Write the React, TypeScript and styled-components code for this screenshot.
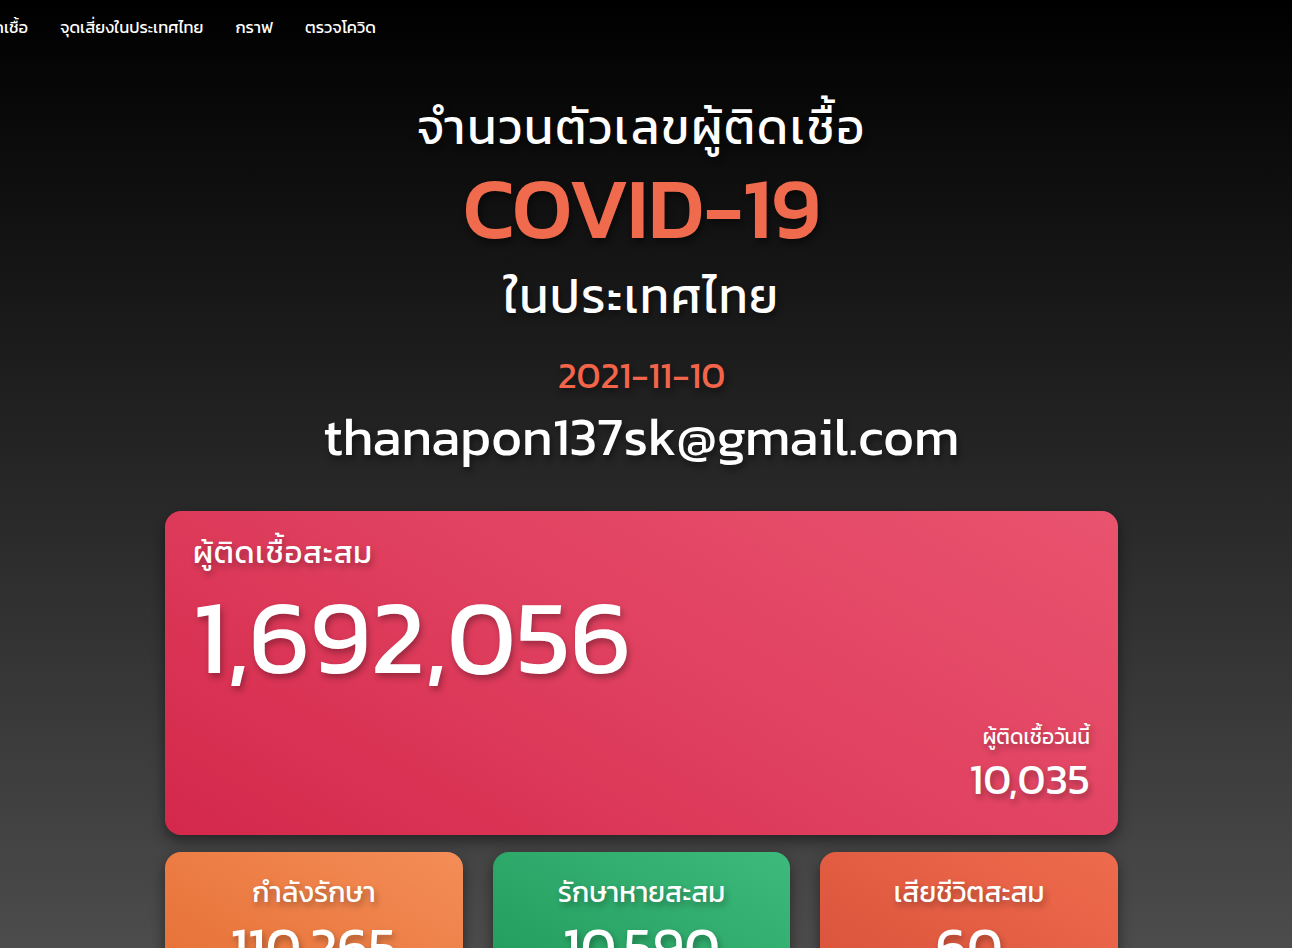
import React from "react";
import styled, { createGlobalStyle } from "styled-components";

const Global = createGlobalStyle`
  html, body { margin: 0; padding: 0; }
  body {
    background: #000;
    font-family: Kanit, "Noto Sans Thai", "Noto Sans", "Liberation Sans", sans-serif;
    color: #fff;
    overflow: hidden;
  }
`;

const Page = styled.div`
  width: 1292px;
  height: 948px;
  overflow: hidden;
  background: linear-gradient(180deg, #000000 0%, #4c4c4c 100%);
`;

const Inner = styled.div`
  width: 1283px;
`;

const Nav = styled.nav`
  height: 54px;
  display: flex;
  align-items: center;
  overflow: hidden;
`;

const NavList = styled.ul`
  display: flex;
  gap: 32px;
  list-style: none;
  margin: 0 0 0 -28px;
  padding: 0;
`;

const NavItem = styled.li`
  font-size: 16.5px;
  color: #fff;
  white-space: nowrap;
`;

const Hero = styled.header`
  display: flex;
  flex-direction: column;
  align-items: center;
  padding-top: 42px;
  text-shadow: 2px 4px 6px rgba(0, 0, 0, 0.45);
`;

const Heading = styled.h1`
  margin: 0;
  font-size: 48px;
  font-weight: 400;
  line-height: 62px;
  letter-spacing: 2px;
`;

const Covid = styled.h2`
  margin: 0;
  font-size: 86px;
  font-weight: 500;
  line-height: 100px;
  color: #f06a4e;
  letter-spacing: -0.5px;
`;

const SubHeading = styled.h3`
  margin: 3px 0 0;
  font-size: 48px;
  font-weight: 400;
  line-height: 70px;
  letter-spacing: 1.5px;
`;

const DateText = styled.div`
  margin-top: 19px;
  font-size: 37px;
  color: #f3654a;
  line-height: 50px;
`;

const Email = styled.div`
  margin-top: 3px;
  font-size: 53px;
  line-height: 68px;
`;

const Cards = styled.main`
  width: 953px;
  margin: 40px auto 0;
  display: flex;
  flex-direction: column;
  gap: 17px;
`;

const BigCard = styled.section`
  height: 324px;
  border-radius: 16px;
  background: linear-gradient(30deg, #d4284b 0%, #e0405f 50%, #e9536e 100%);
  box-shadow: 0 6px 14px rgba(0, 0, 0, 0.45);
  padding: 21px 28px 32px;
  box-sizing: border-box;
  display: flex;
  flex-direction: column;
  text-shadow: 2px 4px 6px rgba(0, 0, 0, 0.3);
`;

const CardLabel = styled.div`
  font-size: 31px;
  line-height: 40px;
  letter-spacing: 0.8px;
`;

const BigNumber = styled.div`
  font-size: 106px;
  line-height: 128px;
  font-weight: 400;
`;

const Today = styled.div`
  margin-top: auto;
  align-self: flex-end;
  text-align: right;
`;

const TodayLabel = styled.div`
  font-size: 21px;
  line-height: 28px;
  margin-bottom: 4px;
`;

const TodayNumber = styled.div`
  font-size: 43px;
  line-height: 48px;
`;

const Row = styled.div`
  display: grid;
  grid-template-columns: repeat(3, 1fr);
  gap: 30px;
`;

const SmallCard = styled.section<{ $from: string; $to: string }>`
  height: 200px;
  border-radius: 16px;
  background: linear-gradient(30deg, ${(p) => p.$from} 0%, ${(p) => p.$to} 100%);
  box-shadow: 0 6px 14px rgba(0, 0, 0, 0.45);
  display: flex;
  flex-direction: column;
  align-items: center;
  padding-top: 20px;
  box-sizing: border-box;
  text-shadow: 2px 4px 6px rgba(0, 0, 0, 0.3);
`;

const SmallLabel = styled.div`
  font-size: 28px;
  line-height: 40px;
`;

const SmallNumber = styled.div`
  margin-top: 2px;
  font-size: 55px;
  line-height: 66px;
`;

const stats = [
  { label: "กำลังรักษา", value: "110,265", from: "#e2692c", to: "#f48d58" },
  { label: "รักษาหายสะสม", value: "10,590", from: "#1b9454", to: "#3dba7c" },
  { label: "เสียชีวิตสะสม", value: "60", from: "#d44c36", to: "#ef6b4d" },
];

export default function App() {
  return (
    <Page>
      <Global />
      <Inner>
        <Nav>
          <NavList>
            <NavItem>ผู้ติดเชื้อ</NavItem>
            <NavItem>จุดเสี่ยงในประเทศไทย</NavItem>
            <NavItem>กราฟ</NavItem>
            <NavItem>ตรวจโควิด</NavItem>
          </NavList>
        </Nav>
        <Hero>
          <Heading>จำนวนตัวเลขผู้ติดเชื้อ</Heading>
          <Covid>COVID-19</Covid>
          <SubHeading>ในประเทศไทย</SubHeading>
          <DateText>2021-11-10</DateText>
          <Email>thanapon137sk@gmail.com</Email>
        </Hero>
        <Cards>
          <BigCard>
            <CardLabel>ผู้ติดเชื้อสะสม</CardLabel>
            <BigNumber>1,692,056</BigNumber>
            <Today>
              <TodayLabel>ผู้ติดเชื้อวันนี้</TodayLabel>
              <TodayNumber>10,035</TodayNumber>
            </Today>
          </BigCard>
          <Row>
            {stats.map((s) => (
              <SmallCard key={s.label} $from={s.from} $to={s.to}>
                <SmallLabel>{s.label}</SmallLabel>
                <SmallNumber>{s.value}</SmallNumber>
              </SmallCard>
            ))}
          </Row>
        </Cards>
      </Inner>
    </Page>
  );
}
